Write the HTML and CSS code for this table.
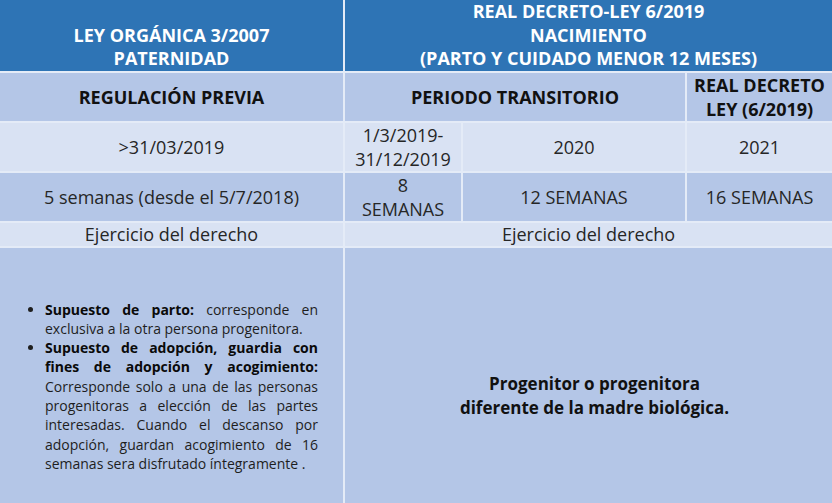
FILE: index.html
```html
<!DOCTYPE html>
<html lang="es">
<head>
<meta charset="utf-8">
<title>Permiso de paternidad</title>
<link rel="stylesheet" href="styles.css">
</head>
<body>
<table class="grid">
  <colgroup>
    <col class="c1"><col class="c2"><col class="c3"><col class="c4">
  </colgroup>
  <tr class="r-head">
    <th class="head">LEY ORGÁNICA 3/2007<br>PATERNIDAD</th>
    <th class="head" colspan="3">REAL DECRETO-LEY 6/2019<br>NACIMIENTO<br>(PARTO Y CUIDADO MENOR 12 MESES)</th>
  </tr>
  <tr class="r-sub">
    <th class="sub">REGULACIÓN PREVIA</th>
    <th class="sub" colspan="2">PERIODO TRANSITORIO</th>
    <th class="sub">REAL DECRETO<br>LEY (6/2019)</th>
  </tr>
  <tr class="r-date light">
    <td>&gt;31/03/2019</td>
    <td>1/3/2019-<br>31/12/2019</td>
    <td>2020</td>
    <td>2021</td>
  </tr>
  <tr class="r-weeks dark">
    <td>5 semanas (desde el 5/7/2018)</td>
    <td>8<br>SEMANAS</td>
    <td>12 SEMANAS</td>
    <td>16 SEMANAS</td>
  </tr>
  <tr class="r-ex light">
    <td>Ejercicio del derecho</td>
    <td colspan="3">Ejercicio del derecho</td>
  </tr>
  <tr class="r-body dark">
    <td class="list-cell">
      <ul class="cases">
        <li><b>Supuesto de parto:</b> corresponde en exclusiva a la otra persona progenitora.</li>
        <li><b>Supuesto de adopción, guardia con fines de adopción y acogimiento:</b> Corresponde solo a una de las personas progenitoras a elección de las partes interesadas. Cuando el descanso por adopción, guardan acogimiento de 16 semanas sera disfrutado íntegramente .</li>
      </ul>
    </td>
    <td class="who" colspan="3">Progenitor o progenitora<br>diferente de la madre biológica.</td>
  </tr>
</table>
</body>
</html>
```

FILE: styles.css
```css
html, body {
  margin: 0;
  padding: 0;
  background: #ffffff;
}

body {
  font-family: "Open Sans", "DejaVu Sans", sans-serif;
  width: 832px;
  height: 503px;
  overflow: hidden;
}

.grid {
  width: 832px;
  border-collapse: collapse;
  table-layout: fixed;
}

.c1 { width: 344px; }
.c2 { width: 118px; }
.c3 { width: 224px; }
.c4 { width: 146px; }

.grid th,
.grid td {
  border: 2px solid #e4ebf7;
  padding: 0;
  text-align: center;
  vertical-align: middle;
  font-size: 18px;
  line-height: 24px;
  color: #262626;
}

.grid tr:first-child th { border-top: 0; }
.grid tr > :first-child { border-left: 0; }
.grid tr > :last-child { border-right: 0; }
.grid tr:last-child td { border-bottom: 0; }

.r-head { height: 70px; }
.r-sub { height: 49px; }
.r-date { height: 49px; }
.r-weeks { height: 49px; }
.r-ex { height: 25px; }
.r-body { height: 258px; }

.head {
  background: #2e74b5;
  color: #ffffff !important;
  font-weight: 700;
  vertical-align: bottom !important;
  line-height: 23.5px !important;
}

.sub {
  background: #b4c6e7;
  color: #111111 !important;
  font-weight: 700;
}

.light td { background: #d9e2f3; }
.dark td { background: #b4c6e7; }

.r-ex td { line-height: 22px; }

.list-cell {
  vertical-align: top !important;
  padding: 52px 25px 0 31px !important;
}

.cases {
  margin: 0;
  padding-left: 14px;
  text-align: justify;
  font-size: 14px;
  line-height: 19.3px;
  color: #1e1e1e;
}

.cases b {
  color: #0a0a0a;
}

.who {
  font-weight: 700;
  font-size: 17px !important;
  color: #111111 !important;
  padding-top: 40px !important;
  padding-left: 12px !important;
}
```
